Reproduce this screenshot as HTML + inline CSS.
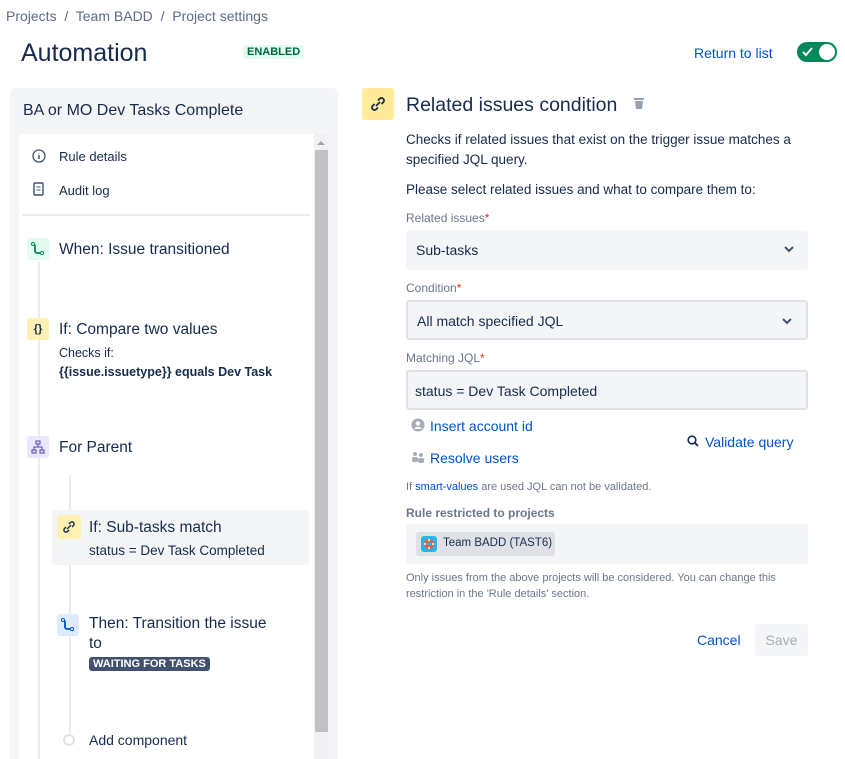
<!DOCTYPE html>
<html><head><meta charset="utf-8"><style>
*{box-sizing:border-box;margin:0;padding:0}
html,body{width:845px;height:759px;overflow:hidden}
body{background:#fff;font-family:"Liberation Sans",sans-serif;color:#172b4d;position:relative}
.a{position:absolute;white-space:nowrap}
.lnk{color:#0052cc}
.lbl{font-size:12px;color:#6b778c;font-weight:bold}
.req{color:#de350b}
.sel{position:absolute;left:406px;width:402px;height:40px;background:#f4f5f7;border-radius:3px;font-size:14px;padding:12px 10px;color:#172b4d}
.chev{position:absolute;right:14px;top:15px}
.ic{position:absolute;width:22px;height:22px;border-radius:3px}
</style></head><body>
<div class="a" style="left:6px;top:8px;font-size:14px;color:#5e6c84">Projects &nbsp;/&nbsp; Team BADD &nbsp;/&nbsp; Project settings</div>
<div class="a" style="left:21px;top:39px;font-size:25px;color:#172b4d">Automation</div>
<div class="a" style="left:243px;top:45px;background:#e3fcef;color:#006644;font-size:11px;font-weight:bold;padding:1px 4px;border-radius:3px">ENABLED</div>
<div class="a lnk" style="left:694px;top:45px;font-size:14px">Return to list</div>
<div class="a" style="left:797px;top:42px;width:40px;height:20px;border-radius:10px;background:#00875a">
<svg class="a" style="left:5px;top:5px" width="11" height="10"><path d="M1 5l3 3 6-7" stroke="#fff" stroke-width="2" fill="none"/></svg>
<div class="a" style="left:22px;top:2px;width:16px;height:16px;border-radius:50%;background:#fff"></div></div>

<div class="a" style="left:10px;top:88px;width:328px;height:671px;background:#f4f5f7;border-radius:6px 6px 0 0"></div>
<div class="a" style="left:23px;top:102px;font-size:16px;color:#172b4d">BA or MO Dev Tasks Complete</div>
<div class="a" style="left:19px;top:134px;width:295px;height:625px;background:#fff;border-radius:4px 0 0 0"></div>
<div class="a" style="left:314px;top:134px;width:14px;height:625px;background:#f1f1f1"></div>
<div class="a" style="left:315px;top:150px;width:13px;height:582px;background:#c1c1c1"></div>
<div class="a" style="left:317px;top:141px;width:0;height:0;border-left:4px solid transparent;border-right:4px solid transparent;border-bottom:4px solid #a3a3a3"></div>

<svg class="a" style="left:32px;top:149px" width="14" height="14"><circle cx="7" cy="7" r="6" stroke="#42526e" stroke-width="1.3" fill="none"/><path d="M7 6v4M7 4v.5" stroke="#42526e" stroke-width="1.5"/></svg>
<div class="a" style="left:59px;top:149px;font-size:13px">Rule details</div>
<svg class="a" style="left:33px;top:182px" width="12" height="14"><rect x="1" y="1" width="9" height="12" rx="1" stroke="#42526e" stroke-width="1.4" fill="none"/><path d="M3.5 5h4M3.5 8h4" stroke="#42526e"/></svg>
<div class="a" style="left:59px;top:183px;font-size:13px">Audit log</div>
<div class="a" style="left:22px;top:214px;width:288px;height:2px;background:#ebecf0"></div>

<div class="a" style="left:38px;top:262px;width:2px;height:500px;background:#ebecf0"></div>
<div class="a" style="left:69px;top:475px;width:2px;height:262px;background:#ebecf0"></div>

<div class="ic" style="left:27px;top:238px;background:#e3fcef"><svg width="22" height="22"><path d="M6 6c1 0 2 1 2 2v5c0 1 1 2 2 2h3" stroke="#00875a" stroke-width="1.8" fill="none"/><circle cx="6" cy="6" r="1.5" stroke="#00875a" fill="#fff"/><circle cx="15" cy="15" r="1.5" stroke="#00875a" fill="#fff"/></svg></div>
<div class="a" style="left:59px;top:241px;font-size:15.5px">When: Issue transitioned</div>

<div class="ic" style="left:27px;top:318px;background:#fff0b3;font-size:11px;font-weight:bold;text-align:center;line-height:22px">{}</div>
<div class="a" style="left:59px;top:321px;font-size:15.5px">If: Compare two values</div>
<div class="a" style="left:59px;top:346px;font-size:12.5px">Checks if:</div>
<div class="a" style="left:59px;top:365px;font-size:12.5px;font-weight:bold">{{issue.issuetype}} equals Dev Task</div>

<div class="ic" style="left:27px;top:436px;background:#eae6ff"><svg width="22" height="22"><rect x="9" y="5" width="4" height="3" stroke="#5243aa" fill="none"/><rect x="5" y="14" width="4" height="3" stroke="#5243aa" fill="none"/><rect x="13" y="14" width="4" height="3" stroke="#5243aa" fill="none"/><path d="M11 8v3M7 14v-3h8v3" stroke="#5243aa" fill="none"/></svg></div>
<div class="a" style="left:59px;top:439px;font-size:15.5px">For Parent</div>

<div class="a" style="left:52px;top:510px;width:257px;height:55px;background:#f4f5f7;border-radius:3px"></div>
<div class="ic" style="left:57px;top:515px;width:24px;height:24px;background:#fff0b3"><svg width="24" height="24"><path d="M10 14l4-4M9 12l-1.5 1.5a2 2 0 003 3L12 15M15 12l1.5-1.5a2 2 0 00-3-3L12 9" stroke="#172b4d" stroke-width="1.4" fill="none"/></svg></div>
<div class="a" style="left:89px;top:519px;font-size:15.5px">If: Sub-tasks match</div>
<div class="a" style="left:89px;top:543px;font-size:13.5px">status = Dev Task Completed</div>

<div class="ic" style="left:57px;top:614px;background:#deebff"><svg width="22" height="22"><path d="M6 6c1 0 2 1 2 2v5c0 1 1 2 2 2h3" stroke="#0052cc" stroke-width="1.8" fill="none"/><circle cx="6" cy="6" r="1.5" stroke="#0052cc" fill="#fff"/><circle cx="15" cy="15" r="1.5" stroke="#0052cc" fill="#fff"/></svg></div>
<div class="a" style="left:89px;top:615px;font-size:15.5px">Then: Transition the issue</div>
<div class="a" style="left:89px;top:635px;font-size:15.5px">to</div>
<div class="a" style="left:89px;top:657px;background:#42526e;color:#fff;font-size:11px;font-weight:bold;padding:1px 4px;border-radius:3px">WAITING FOR TASKS</div>
<div class="a" style="left:63px;top:734px;width:12px;height:12px;border-radius:50%;border:2px solid #dfe1e6;background:#fff"></div>
<div class="a" style="left:89px;top:732px;font-size:14px">Add component</div>

<div class="ic" style="left:362px;top:88px;width:32px;height:32px;background:#ffeb99"><svg width="32" height="32"><path d="M14 18l4-4M12.5 16l-2 2a2.5 2.5 0 003.5 3.5l2-2M19.5 16l2-2a2.5 2.5 0 00-3.5-3.5l-2 2" stroke="#172b4d" stroke-width="1.8" fill="none"/></svg></div>
<div class="a" style="left:406px;top:94px;font-size:19.5px">Related issues condition</div>
<svg class="a" style="left:633px;top:97px" width="12" height="13"><rect x="1" y="1" width="10" height="2" fill="#97a0af"/><path d="M2 4h8l-1 8H3z" fill="#97a0af"/></svg>
<div class="a" style="left:406px;top:130px;font-size:13.5px;line-height:20px;color:#172b4d">Checks if related issues that exist on the trigger issue matches a<br>specified JQL query.</div>
<div class="a" style="left:406px;top:182px;font-size:13.5px">Please select related issues and what to compare them to:</div>
<div class="a lbl" style="left:406px;top:211px;font-weight:normal">Related issues<span class="req">*</span></div>
<div class="sel" style="top:230px;padding-left:10px">Sub-tasks<svg class="chev" width="10" height="8"><path d="M1 2l4 4 4-4" stroke="#42526e" stroke-width="2" fill="none"/></svg></div>
<div class="a lbl" style="left:406px;top:281px;font-weight:normal">Condition<span class="req">*</span></div>
<div class="sel" style="top:300px;border:2px solid #dfe1e6;padding-top:11px;padding-left:9px">All match specified JQL<svg class="chev" width="10" height="8"><path d="M1 2l4 4 4-4" stroke="#42526e" stroke-width="2" fill="none"/></svg></div>
<div class="a lbl" style="left:406px;top:351px;font-weight:normal">Matching JQL<span class="req">*</span></div>
<div class="sel" style="top:370px;border:2px solid #dfe1e6;padding-top:11px;padding-left:7px">status = Dev Task Completed</div>

<svg class="a" style="left:411px;top:418px" width="14" height="14"><circle cx="7" cy="7" r="6.5" fill="#a5adba"/><circle cx="7" cy="5.5" r="2.3" fill="#fff"/><path d="M3 11a4.5 4 0 018 0" fill="#fff"/></svg>
<div class="a lnk" style="left:430px;top:418px;font-size:14px">Insert account id</div>
<svg class="a" style="left:411px;top:451px" width="14" height="12"><circle cx="4" cy="3" r="2" fill="#a5adba"/><circle cx="10" cy="4" r="2" fill="#a5adba"/><rect x="1" y="6" width="6" height="5" rx="2" fill="#a5adba"/><rect x="7" y="7" width="6" height="5" rx="2" fill="#a5adba"/></svg>
<div class="a lnk" style="left:430px;top:450px;font-size:14px">Resolve users</div>
<svg class="a" style="left:687px;top:435px" width="12" height="12"><circle cx="5" cy="5" r="3.8" stroke="#172b4d" stroke-width="1.6" fill="none"/><path d="M8 8l3 3" stroke="#172b4d" stroke-width="1.8"/></svg>
<div class="a lnk" style="left:705px;top:434px;font-size:14px">Validate query</div>
<div class="a" style="left:406px;top:481px;font-size:11px;color:#6b778c">If <span class="lnk">smart-values</span> are used JQL can not be validated.</div>
<div class="a lbl" style="left:406px;top:506px">Rule restricted to projects</div>
<div class="a" style="left:406px;top:524px;width:402px;height:40px;background:#f4f5f7"></div>
<div class="a" style="left:416px;top:532px;width:139px;height:24px;background:#dfe1e6;border-radius:3px;font-size:11.5px;padding:5px 0 0 27px">Team BADD (TAST6)</div>
<svg class="a" style="left:421px;top:536px" width="16" height="16"><rect width="16" height="16" rx="3" fill="#2bb5e8"/><circle cx="8" cy="8" r="5" fill="#ff5630"/><circle cx="8" cy="8" r="2.2" fill="#2bb5e8"/><path d="M8 3v2M8 11v2M3 8h2M11 8h2" stroke="#fff" stroke-width="1.5"/></svg>
<div class="a" style="left:406px;top:570px;font-size:11px;line-height:16px;color:#6b778c">Only issues from the above projects will be considered. You can change this<br>restriction in the 'Rule details' section.</div>
<div class="a lnk" style="left:697px;top:632px;font-size:14px">Cancel</div>
<div class="a" style="left:755px;top:624px;width:53px;height:32px;background:#f4f5f7;border-radius:3px;color:#a5adba;font-size:14px;text-align:center;line-height:32px">Save</div>
</body></html>
